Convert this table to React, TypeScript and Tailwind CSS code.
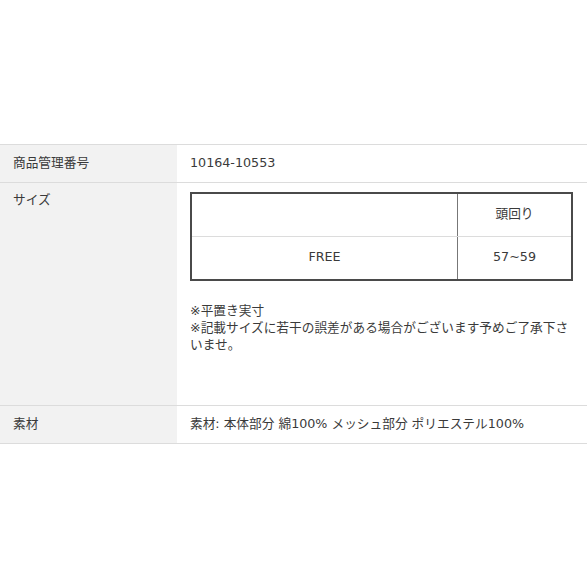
import React from "react";

export default function App() {
  const font = { fontFamily: '"DejaVu Sans", "Noto Sans CJK JP", sans-serif' };
  return (
    <div className="w-[587px] h-[587px] bg-white text-[#3a3a3a] text-[12.7px] leading-[17px]" style={font}>
      <div className="pt-[144px]">
        <div className="border-t border-[#dcdcdc]">
          <div className="flex border-b border-[#dcdcdc] h-[38px]">
            <div className="w-[177px] bg-[#f2f2f2] pl-[13px] pb-[3px] flex items-center">商品管理番号</div>
            <div className="flex-1 pl-[13px] pb-[3px] flex items-center">10164-10553</div>
          </div>
          <div className="flex border-b border-[#dcdcdc] h-[223px]">
            <div className="w-[177px] bg-[#f2f2f2] pl-[13px] pt-[8px]">サイズ</div>
            <div className="flex-1 pl-[13px] pr-[14px] pt-[9px]">
              <div className="border-2 border-[#4a4a4a] w-[383px]">
                <div className="flex h-[43px] border-b border-[#dcdcdc]">
                  <div className="w-[266px] border-r border-[#777]" />
                  <div className="flex-1 flex items-center justify-center pb-[4px]">頭回り</div>
                </div>
                <div className="flex h-[42px]">
                  <div className="w-[266px] border-r border-[#777] flex items-center justify-center pb-[4px]">FREE</div>
                  <div className="flex-1 flex items-center justify-center pb-[4px]">57~59</div>
                </div>
              </div>
              <div className="mt-[21px] w-[383px]">
                ※平置き実寸<br />
                ※記載サイズに若干の誤差がある場合がございます予めご了承下さいませ。
              </div>
            </div>
          </div>
          <div className="flex border-b border-[#dcdcdc] h-[38px]">
            <div className="w-[177px] bg-[#f2f2f2] pl-[13px] pb-[3px] flex items-center">素材</div>
            <div className="flex-1 pl-[13px] pb-[3px] flex items-center">素材: 本体部分 綿100% メッシュ部分 ポリエステル100%</div>
          </div>
        </div>
      </div>
    </div>
  );
}
